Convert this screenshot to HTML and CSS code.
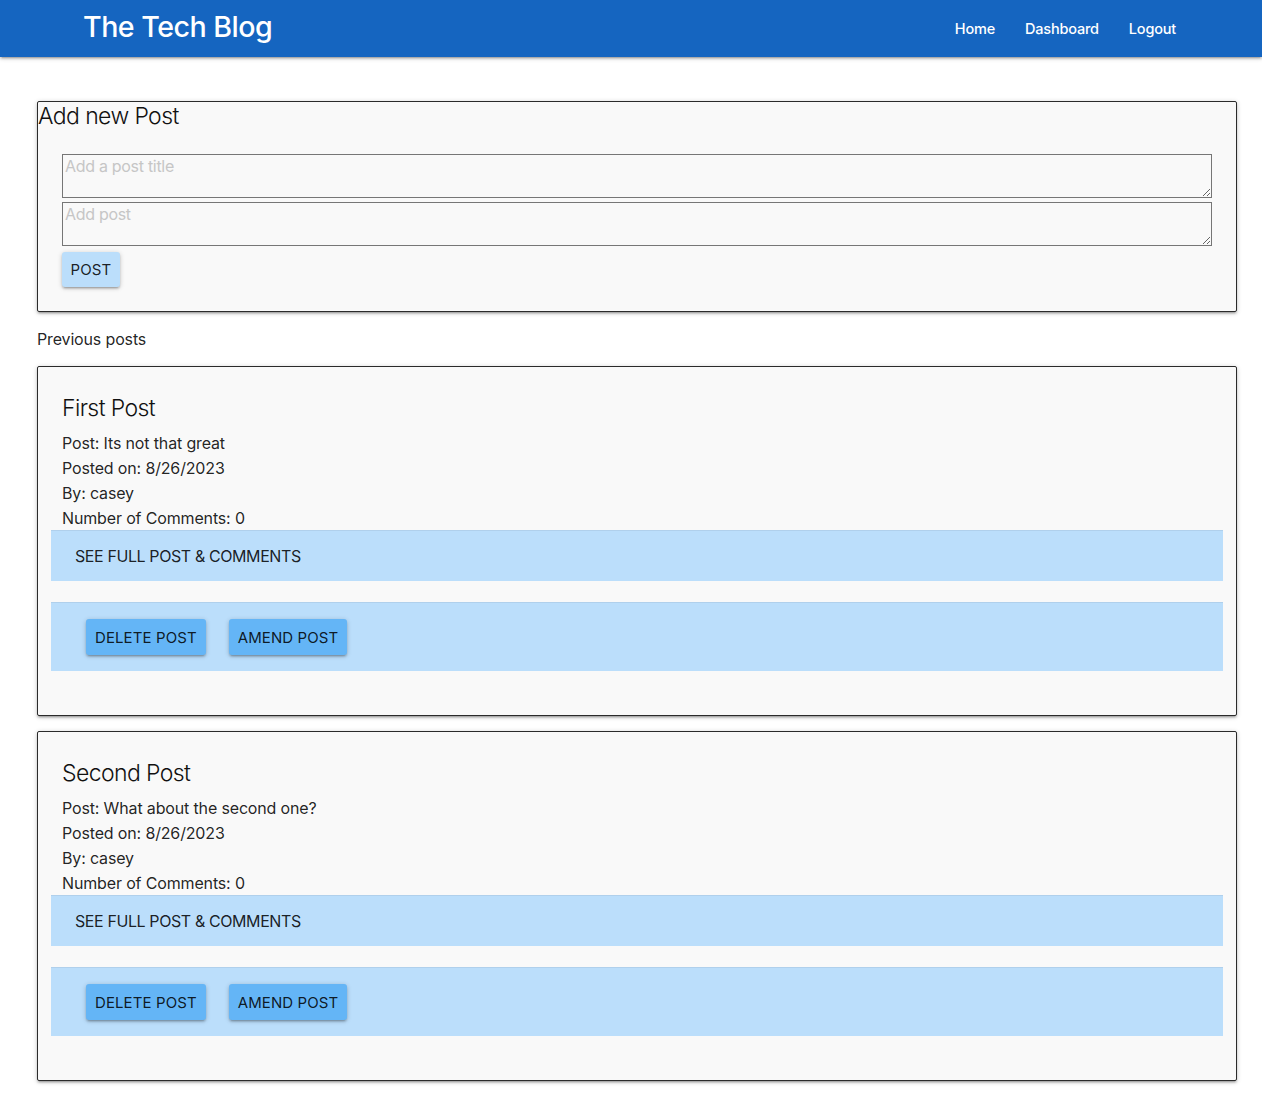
FILE: index.html
```html
<!DOCTYPE html>
<html lang="en">
<head>
<meta charset="utf-8">
<title>The Tech Blog</title>
<link rel="stylesheet" href="styles.css">
</head>
<body>
<nav class="nav">
  <a class="brand" href="#">The Tech Blog</a>
  <ul class="nav-links">
    <li><a href="#">Home</a></li>
    <li><a href="#">Dashboard</a></li>
    <li><a href="#">Logout</a></li>
  </ul>
</nav>
<main class="main">
  <section class="card new-post">
    <h2 class="new-title">Add new Post</h2>
    <form class="post-form">
      <textarea class="field" placeholder="Add a post title"></textarea>
      <textarea class="field" placeholder="Add post"></textarea>
      <button type="button" class="btn btn-light">Post</button>
    </form>
  </section>
  <p class="prev-label">Previous posts</p>
  <article class="card post">
    <h3 class="post-title">First Post</h3>
    <p class="line">Post: Its not that great</p>
    <p class="line">Posted on: 8/26/2023</p>
    <p class="line">By: casey</p>
    <p class="line">Number of Comments: 0</p>
    <div class="bar see-bar"><a href="#">See full post &amp; comments</a></div>
    <div class="bar action-bar">
      <button type="button" class="btn btn-mid">Delete post</button>
      <button type="button" class="btn btn-mid">Amend post</button>
    </div>
  </article>
  <article class="card post">
    <h3 class="post-title">Second Post</h3>
    <p class="line">Post: What about the second one?</p>
    <p class="line">Posted on: 8/26/2023</p>
    <p class="line">By: casey</p>
    <p class="line">Number of Comments: 0</p>
    <div class="bar see-bar"><a href="#">See full post &amp; comments</a></div>
    <div class="bar action-bar">
      <button type="button" class="btn btn-mid">Delete post</button>
      <button type="button" class="btn btn-mid">Amend post</button>
    </div>
  </article>
</main>
</body>
</html>
```
FILE: styles.css
```css
* { box-sizing: border-box; }
html, body { margin: 0; padding: 0; }
body {
  font-family: Inter, "Noto Sans", "Liberation Sans", sans-serif;
  color: rgba(0,0,0,0.87);
  background: #fff;
  font-size: 16px;
  letter-spacing: -0.15px;
}
a { text-decoration: none; color: inherit; }

.nav {
  height: 57px;
  background: #1565c0;
  display: flex;
  align-items: center;
  justify-content: space-between;
  padding: 0 71px 0 83px;
  box-shadow: 0 2px 2px 0 rgba(0,0,0,0.14), 0 3px 1px -2px rgba(0,0,0,0.12), 0 1px 5px 0 rgba(0,0,0,0.2);
}
.brand {
  color: #fff;
  font-size: 28.6px;
  font-weight: 500;
  letter-spacing: -0.5px;
  line-height: 57px;
  margin-top: -5px;
}
.nav-links {
  list-style: none;
  display: flex;
  margin: 0;
  padding: 0;
}
.nav-links a {
  display: block;
  color: #fff;
  font-size: 14.5px;
  font-weight: 500;
  letter-spacing: -0.2px;
  padding: 0 15px;
  line-height: 52px;
}

.main {
  padding: 44px 25px 30px 37px;
}

.card {
  background: #f9f9f9;
  border: 1px solid #2b2b2b;
  border-radius: 2px;
  box-shadow: 0 2px 2px 0 rgba(0,0,0,0.14), 0 3px 1px -2px rgba(0,0,0,0.12), 0 1px 5px 0 rgba(0,0,0,0.2);
}

.new-post {
  padding: 0 24px 24px 0;
}
.new-title {
  margin: 0;
  font-size: 23px;
  font-weight: 300;
  letter-spacing: -0.6px;
  line-height: 29px;
  padding-top: 0;
  color: #111;
}
.post-form {
  padding-left: 24px;
  margin-top: 23px;
  display: flex;
  flex-direction: column;
  align-items: flex-start;
}
.field {
  display: block;
  width: 100%;
  height: 44px;
  margin: 0 0 4px 0;
  border: 1px solid #767676;
  background: #f9f9f9;
  font-family: inherit;
  font-size: 16px;
  letter-spacing: -0.3px;
  padding: 1px 2px;
  resize: vertical;
}
.field::placeholder { color: #c6c6c6; }

.btn {
  border: none;
  border-radius: 3px;
  font-family: inherit;
  font-size: 15px;
  letter-spacing: 0.1px;
  text-transform: uppercase;
  color: rgba(0,0,0,0.87);
  padding: 0 9px;
  height: 35px;
  box-shadow: 0 2px 2px 0 rgba(0,0,0,0.14), 0 3px 1px -2px rgba(0,0,0,0.12), 0 1px 5px 0 rgba(0,0,0,0.2);
  cursor: pointer;
}
.btn-light {
  background: #bbdefb;
  margin-top: 2px;
  width: 58px;
  padding: 0;
}
.btn-mid {
  background: #64b5f6;
  height: 36px;
}

.prev-label {
  margin: 16px 0 16px;
  line-height: 22px;
}

.post {
  padding: 25px 13px 44px 13px;
  margin-bottom: 15px;
}
.post-title {
  margin: 0 0 7px 11px;
  font-size: 23px;
  font-weight: 300;
  letter-spacing: -0.6px;
  line-height: 32px;
  color: #111;
}
.line {
  margin: 0 0 0 11px;
  line-height: 25px;
}
.bar {
  background: #bbdefb;
  border-top: 1px solid rgba(0,0,0,0.06);
}
.see-bar {
  height: 51px;
  display: flex;
  align-items: center;
  padding-left: 24px;
  text-transform: uppercase;
  letter-spacing: -0.4px;
  margin-top: -1px;
}
.see-bar a { color: rgba(0,0,0,0.87); }
.action-bar {
  margin-top: 21px;
  height: 69px;
  padding: 16px 35px;
  display: flex;
  gap: 23px;
}
```
